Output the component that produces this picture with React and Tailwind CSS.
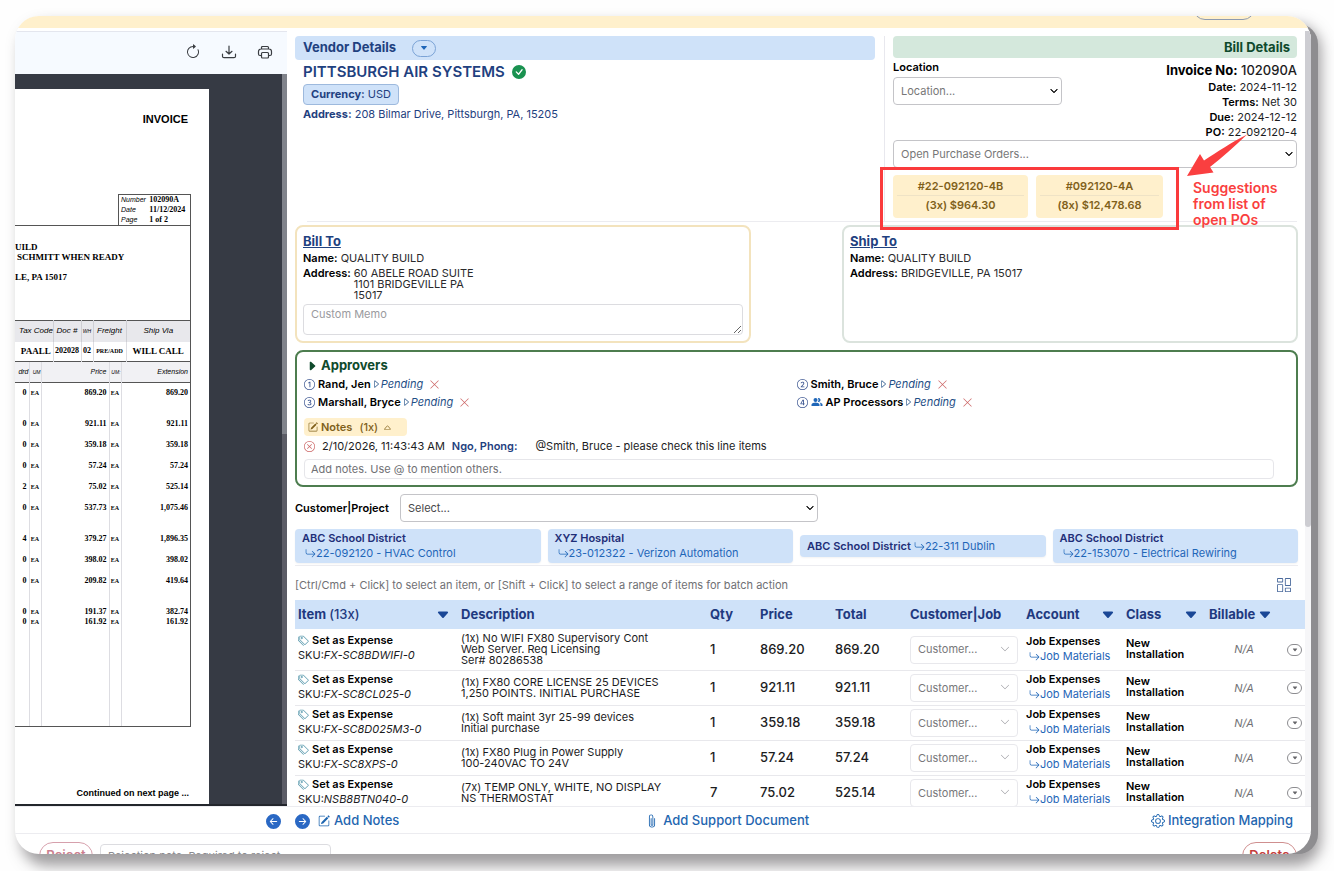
import React from 'react';
import {
  Bs1Circle,
  Bs2Circle,
  Bs3Circle,
  Bs4Circle,
  BsArrowClockwise,
  BsArrowLeftCircleFill,
  BsArrowReturnRight,
  BsArrowRightCircleFill,
  BsCaretDownFill,
  BsCaretRight,
  BsCaretRightFill,
  BsCaretUp,
  BsCheckCircleFill,
  BsChevronDown,
  BsColumnsGap,
  BsGear,
  BsPaperclip,
  BsPencilSquare,
  BsTags,
  BsXCircle,
  BsXLg,
} from 'react-icons/bs';
import { MdPeopleAlt } from 'react-icons/md';

const invoiceLines = [
  { ordered: '0', price: '869.20', ext: '869.20', height: 'h-[31px]' },
  { ordered: '0', price: '921.11', ext: '921.11', height: 'h-[21px]' },
  { ordered: '0', price: '359.18', ext: '359.18', height: 'h-[21px]' },
  { ordered: '0', price: '57.24', ext: '57.24', height: 'h-[21px]' },
  { ordered: '2', price: '75.02', ext: '525.14', height: 'h-[21px]' },
  { ordered: '0', price: '537.73', ext: '1,075.46', height: 'h-[31px]' },
  { ordered: '4', price: '379.27', ext: '1,896.35', height: 'h-[21px]' },
  { ordered: '0', price: '398.02', ext: '398.02', height: 'h-[21px]' },
  { ordered: '0', price: '209.82', ext: '419.64', height: 'h-[31px]' },
  { ordered: '0', price: '191.37', ext: '382.74', height: 'h-[10px]' },
  { ordered: '0', price: '161.92', ext: '161.92', height: 'h-[109px]' },
];

const approvers = [
  { Icon: Bs1Circle, name: 'Rand, Jen' },
  { Icon: Bs2Circle, name: 'Smith, Bruce' },
  { Icon: Bs3Circle, name: 'Marshall, Bryce' },
  { Icon: Bs4Circle, name: 'AP Processors', group: true },
];

const projects = [
  { customer: 'ABC School District', job: '22-092120 - HVAC Control' },
  { customer: 'XYZ Hospital', job: '23-012322 - Verizon Automation' },
  { customer: 'ABC School District', job: '22-311 Dublin', inline: true },
  { customer: 'ABC School District', job: '22-153070 - Electrical Rewiring' },
];

const items = [
  { sku: 'FX-SC8BDWIFI-0', desc: ['(1x) No WIFI FX80 Supervisory Cont', 'Web Server. Req Licensing', 'Ser# 80286538'], qty: 1, price: '869.20', total: '869.20' },
  { sku: 'FX-SC8CL025-0', desc: ['(1x) FX80 CORE LICENSE 25 DEVICES', '1,250 POINTS. INITIAL PURCHASE'], qty: 1, price: '921.11', total: '921.11' },
  { sku: 'FX-SC8D025M3-0', desc: ['(1x) Soft maint 3yr 25-99 devices', 'Initial purchase'], qty: 1, price: '359.18', total: '359.18' },
  { sku: 'FX-SC8XPS-0', desc: ['(1x) FX80 Plug in Power Supply', '100-240VAC TO 24V'], qty: 1, price: '57.24', total: '57.24' },
  { sku: 'NSB8BTN040-0', desc: ['(7x) TEMP ONLY, WHITE, NO DISPLAY', 'NS THERMOSTAT'], qty: 7, price: '75.02', total: '525.14' },
];

const SelectBox = ({ id, label, placeholder, className = '', tone = 'text-[#777777]' }) => (
  <div className={`relative ${className}`}>
    <select
      id={id}
      aria-label={label}
      className={`block h-7 w-full appearance-none rounded border border-[#c4c4c8] bg-white px-[7px] text-[11px] ${tone}`}
    >
      <option>{placeholder}</option>
    </select>
    <BsChevronDown className="pointer-events-none absolute right-1 top-[10px] size-2 stroke-[1.5] text-black" />
  </div>
);

const PdfToolbar = () => (
  <div className="flex h-[43px] shrink-0 items-center justify-end gap-5 border-t border-[#e4e6ee] bg-[#f6faff] pr-3.5 pb-0.5 text-[#3a3d42]">
    <button aria-label="Rotate"><BsArrowClockwise className="size-4" /></button>
    <button aria-label="Download">
      <svg className="size-4" viewBox="0 0 16 16" fill="none" stroke="currentColor" strokeWidth="1.2" strokeLinecap="round" strokeLinejoin="round">
        <path d="M8 2v8M5 7.3 8 10l3-2.7M1.500 10v2.200a1.500 1.500 0 0 0 1.500 1.500h10a1.500 1.500 0 0 0 1.500-1.500V10" />
      </svg>
    </button>
    <button aria-label="Print">
      <svg className="size-4" viewBox="0 0 16 16" fill="none" stroke="currentColor" strokeWidth="1.2" strokeLinejoin="round">
        <path d="M4.500 5V3.500A1 1 0 0 1 5.500 2.500h5a1 1 0 0 1 1 1V5M4.500 11.500H3a1.500 1.500 0 0 1-1.500-1.500V7.500A2.500 2.500 0 0 1 4 5h8a2.500 2.500 0 0 1 2.500 2.500V10a1.500 1.500 0 0 1-1.500 1.500h-1.500" />
        <rect x="4.500" y="8.500" width="7" height="5.500" rx="1" />
      </svg>
    </button>
  </div>
);

const InvoicePage = () => (
  <div className="w-[194px] bg-white pr-[18px] font-['Liberation_Serif',serif] text-[9px] leading-[10px] font-bold text-black">
    <h2 className="pt-[23px] pr-[3px] text-right font-['Liberation_Sans',sans-serif] text-[11px] leading-[14px]">INVOICE</h2>
    <table className="mt-[68px] ml-auto w-[73px] border border-b-0 border-[#555555]">
      <tbody>
        {[['Number', '102090A'], ['Date', '11/12/2024'], ['Page', '1 of 2']].map(([label, value]) => (
          <tr key={label}>
            <th className="pl-0.5 text-left font-['Liberation_Sans',sans-serif] text-[7px] font-normal italic">{label}</th>
            <td className="whitespace-nowrap text-[8px]">{value}</td>
          </tr>
        ))}
      </tbody>
    </table>
    <div className="border-y border-r border-[#555555]">
      <div className="h-[94px] pt-4 whitespace-nowrap">
        <p>UILD</p>
        <p className="pl-0.5">SCHMITT WHEN READY</p>
        <p className="pt-2.5">LE, PA 15017</p>
      </div>
      <table className="w-full table-fixed border-y border-[#555555] text-center whitespace-nowrap">
        <colgroup>
          <col />
          <col className="w-[28px]" />
          <col className="w-[12px]" />
          <col className="w-[33px]" />
          <col className="w-[64px]" />
        </colgroup>
        <thead>
          <tr className="h-[21px] bg-[#e8e8ec] font-['Liberation_Sans',sans-serif] text-[8px] italic">
            <th className="pl-1 font-normal">Tax Code</th>
            <th className="border-l border-[#cfcfd4] font-normal">Doc #</th>
            <th className="border-l border-[#cfcfd4] text-[5px] font-normal">WH</th>
            <th className="border-l border-[#cfcfd4] font-normal">Freight</th>
            <th className="border-l border-[#cfcfd4] font-normal">Ship Via</th>
          </tr>
        </thead>
        <tbody>
          <tr className="h-[20px]">
            <td className="pl-1">PAALL</td>
            <td className="border-l border-[#dddde2] text-[8px]">202028</td>
            <td className="border-l border-[#dddde2] text-[8px]">02</td>
            <td className="border-l border-[#dddde2] text-[6px]">PRE/ADD</td>
            <td className="border-l border-[#dddde2]">WILL CALL</td>
          </tr>
        </tbody>
      </table>
      <table className="w-full table-fixed text-right whitespace-nowrap">
        <colgroup>
          <col className="w-[14px]" />
          <col className="w-[12px]" />
          <col />
          <col className="w-[12px]" />
          <col className="w-[69px]" />
        </colgroup>
        <thead>
          <tr className="h-[20px] border-b border-[#555555] bg-[#f1f1f4] font-['Liberation_Sans',sans-serif] text-[7px] italic">
            <th className="font-normal">drd</th>
            <th className="border-x border-[#dddde2] text-[5px] font-normal">UM</th>
            <th className="pr-0.5 font-normal">Price</th>
            <th className="border-x border-[#dddde2] text-[5px] font-normal">UM:</th>
            <th className="pr-0.5 font-normal">Extension</th>
          </tr>
        </thead>
        <tbody className="align-top text-[8px]">
          <tr className="h-[6px]">
            <td />
            <td className="border-x border-[#dddde2]" />
            <td />
            <td className="border-x border-[#dddde2]" />
            <td />
          </tr>
          {invoiceLines.map((line) => (
            <tr key={line.price} className={line.height}>
              <td className="pr-0.5">{line.ordered}</td>
              <td className="border-x border-[#dddde2] text-center text-[6px]">EA</td>
              <td className="pr-0.5">{line.price}</td>
              <td className="border-x border-[#dddde2] text-center text-[6px]">EA</td>
              <td className="pr-0.5">{line.ext}</td>
            </tr>
          ))}
        </tbody>
      </table>
    </div>
    <p className="pt-[60px] pr-[2px] text-right font-['Liberation_Sans',sans-serif] leading-3">Continued on next page ...</p>
  </div>
);

const PdfPane = () => (
  <aside className="flex w-[272px] shrink-0 flex-col">
    <PdfToolbar />
    <div className="flex min-h-0 flex-1 overflow-hidden border-b-2 border-[#23262c] bg-[#363a44]">
      <div className="flex pt-[15px]">
        <InvoicePage />
      </div>
      <div className="ml-auto flex w-[5px] flex-col bg-[#5b5c66]">
        <div className="h-[360px] bg-[#80838b]" />
      </div>
    </div>
  </aside>
);

const VendorDetails = () => (
  <section className="flex-1 pr-[9px] text-[#1f4180]">
    <div className="flex h-6 items-center gap-4 rounded-sm bg-[#cfe2f9] px-2">
      <h2 className="text-[13px] font-bold">Vendor Details</h2>
      <button aria-label="Vendor options" className="flex h-[17px] w-6 items-center justify-center rounded-full border border-[#7ba3d6] text-[#1f66b8]">
        <BsCaretDownFill className="size-2" />
      </button>
    </div>
    <div className="px-2">
      <h3 className="flex items-center gap-[7px] pt-0.5 text-[15px] leading-5 font-semibold">
        PITTSBURGH AIR SYSTEMS
        <BsCheckCircleFill className="size-3.5 text-[#1a9250]" />
      </h3>
      <div className="mt-0.5 flex">
        <span className="rounded border border-[#9db9dd] bg-[#cfe2f9] px-[7px] text-[11px] leading-[19px]">
          <b>Currency:</b> USD
        </span>
      </div>
      <p className="pt-px text-[11px] leading-4"><b>Address:</b> 208 Bilmar Drive, Pittsburgh, PA, 15205</p>
    </div>
  </section>
);

const Annotation = () => (
  <>
    <div className="pointer-events-none absolute -top-2 -right-4 -bottom-3 -left-[13px] border-[3px] border-[#fa3a3c]" />
    <svg className="pointer-events-none absolute -top-[43px] left-full ml-6 h-[46px] w-[64px]" viewBox="0 0 64 46" fill="#fa3f40">
      <path d="M0 44 13 22 17 28.500C30 20 45 10 60 2.500 48 14 36 25 23 35l3.500 5.500Z" />
    </svg>
    <p className="pointer-events-none absolute top-[5px] left-full ml-[30px] w-24 text-[14px] leading-4 font-semibold text-[#fa3f40]">
      Suggestions from list of open POs
    </p>
  </>
);

const BillDetails = () => (
  <section className="w-[413px] border-l border-[#e8e8ee] pb-[3px] pl-2 text-[#1c1c1e]">
    <h2 className="h-[22px] rounded-sm bg-[#d4e8dc] pr-[7px] text-right text-[13px] leading-[22px] font-bold text-[#0f4a2c]">Bill Details</h2>
    <div className="flex justify-between">
      <div>
        <label htmlFor="location" className="block pt-px pb-0.5 text-[11px] leading-4 font-semibold text-black">Location</label>
        <SelectBox id="location" placeholder="Location..." className="w-[169px]" />
      </div>
      <div className="pt-1 text-right text-[11px] leading-[15px]">
        <p className="pb-0.5 text-[13px] leading-4 font-medium"><b className="text-black">Invoice No:</b> 102090A</p>
        <p><b className="font-semibold text-black">Date:</b> 2024-11-12</p>
        <p><b className="font-semibold text-black">Terms:</b> Net 30</p>
        <p><b className="font-semibold text-black">Due:</b> 2024-12-12</p>
        <p><b className="font-semibold text-black">PO:</b> 22-092120-4</p>
      </div>
    </div>
    <SelectBox label="Open purchase orders" placeholder="Open Purchase Orders..." />
    <div className="relative mt-[7px] flex w-[270px] gap-2 text-[11px] font-semibold text-[#80601a]">
      <button className="flex-1 rounded-sm bg-[#fff0cc] px-1 pt-[3px] pb-1">
        <span className="block border-b border-[#efe3c6] leading-[17px]">#22-092120-4B</span>
        <span className="block leading-[18px]">(3x) $964.30</span>
      </button>
      <button className="w-[127px] rounded-sm bg-[#fff0cc] px-1 pt-[3px] pb-1">
        <span className="block border-b border-[#efe3c6] leading-[17px]">#092120-4A</span>
        <span className="block leading-[18px]">(8x) $12,478.68</span>
      </button>
      <Annotation />
    </div>
  </section>
);

const AddressCards = () => (
  <div className="flex justify-between gap-[91px] pt-[3px] pr-[7px] text-[11px] leading-[15px] text-[#2a2a2c]">
    <section className="flex-1 rounded-lg border-2 border-[#f3e3bd] px-1.5 pt-[5px] pb-1.5">
      <h3><a href="#bill-to" className="text-[13px] leading-[18px] font-bold text-[#1f4180] underline">Bill To</a></h3>
      <p className="pt-px"><b className="font-semibold text-black">Name:</b> QUALITY BUILD</p>
      <div className="flex gap-[3px]">
        <b className="font-semibold text-black">Address:</b>
        <p className="pt-0.5 leading-[11px]">60 ABELE ROAD SUITE<br />1101 BRIDGEVILLE PA<br />15017</p>
      </div>
      <textarea
        aria-label="Custom memo"
        placeholder="Custom Memo"
        className="mt-[3px] block h-[31px] w-full resize-y rounded-sm border border-[#dcdce0] px-[7px] py-0.5 placeholder:text-[#9a9a9e]"
      />
    </section>
    <section className="flex-1 rounded-lg border-2 border-[#dbe3dd] px-1.5 pt-[5px]">
      <h3><a href="#ship-to" className="text-[13px] leading-[18px] font-bold text-[#1f4180] underline">Ship To</a></h3>
      <p className="pt-px"><b className="font-semibold text-black">Name:</b> QUALITY BUILD</p>
      <p><b className="font-semibold text-black">Address:</b> BRIDGEVILLE, PA 15017</p>
    </section>
  </div>
);

const Approvers = () => (
  <section className="mt-[7px] mr-[7px] rounded-lg border-2 border-[#4d7d4f] px-[7px] pt-[5px] pb-1.5 text-[11px] text-[#1c1c1e]">
    <h3 className="flex h-[18px] items-center gap-[3px] pl-0.5 text-[13px] font-bold text-[#0f4a2c]">
      <BsCaretRightFill className="size-3" />
      Approvers
    </h3>
    <div className="grid grid-cols-2">
      {approvers.map(({ Icon, name, group }) => (
        <div key={name} className="flex h-[18px] items-center">
          <Icon className="mr-[3px] size-[11px] text-[#3a5490]" />
          {group && <MdPeopleAlt className="mr-[3px] size-3 text-[#1f66b8]" />}
          <b className="font-semibold text-black">{name}</b>
          <BsCaretRight className="size-2.5 text-[#1f4f86]" />
          <i className="text-[#1f4f86]">Pending</i>
          <button aria-label={`Remove ${name}`} className="ml-1.5 text-[#cc6666]"><BsXLg className="size-[11px]" /></button>
        </div>
      ))}
    </div>
    <button className="mt-[7px] flex h-[18px] w-[103px] items-center gap-[3px] rounded-sm bg-[#fff0cc] pl-1 text-[#80601a]">
      <BsPencilSquare className="size-2.5" />
      <b className="font-semibold">Notes</b>
      <span className="pl-1 font-medium">(1x)</span>
      <BsCaretUp className="ml-0.5 size-[9px]" />
    </button>
    <div className="flex h-5 items-center">
      <button aria-label="Delete note" className="mr-[7px] text-[#cc6666]"><BsXCircle className="size-[11px]" /></button>
      2/10/2026, 11:43:43 AM
      <b className="mr-[18px] ml-[7px] font-semibold text-[#1f4180]">Ngo, Phong:</b>
      @Smith, Bruce - please check this line items
    </div>
    <div className="pt-[3px] pr-[15px]">
      <input aria-label="Add notes" placeholder="Add notes. Use @ to mention others." className="h-5 w-full rounded-sm border border-[#e6e6ea] px-1.5 placeholder:text-[#707074]" />
    </div>
  </section>
);

const ProjectPicker = () => (
  <section className="pr-[7px]">
    <div className="flex items-center pt-[7px]">
      <label htmlFor="project" className="w-[105px] text-[11px] font-semibold text-black">Customer|Project</label>
      <SelectBox id="project" placeholder="Select..." className="w-[418px]" tone="text-[#48484a]" />
    </div>
    <div className="grid grid-cols-4 items-center gap-[7px] border-b border-[#ececf0] pt-[7px] pb-0.5">
      {projects.map(({ customer, job, inline }) => (
        <button
          key={job}
          className={`rounded-sm bg-[#cfe2f9] px-[7px] text-left text-[11px] shadow-xs ${inline ? 'flex h-[22px] items-center' : 'h-[34px]'}`}
        >
          <b className="block leading-[15px] font-semibold text-[#1f2f78]">{customer}</b>
          <span className="flex items-center pl-[3px] leading-[15px] text-[#1f66b8]">
            <BsArrowReturnRight className="size-[11px]" />
            {job}
          </span>
        </button>
      ))}
    </div>
  </section>
);

const Sortable = ({ children }) => (
  <button className="flex w-full items-center justify-between pr-[7px]">
    <span>{children}</span>
    <BsCaretDownFill className="size-3.5 text-[#1a4796]" />
  </button>
);

const ItemsTable = () => (
  <table className="w-full table-fixed text-left text-[11px] text-[#1c1c1e]">
    <colgroup>
      <col className="w-[162px]" />
      <col />
      <col className="w-[50px]" />
      <col className="w-[75px]" />
      <col className="w-[75px]" />
      <col className="w-[116px]" />
      <col className="w-[100px]" />
      <col className="w-[83px]" />
      <col className="w-[74px]" />
      <col className="w-[26px]" />
    </colgroup>
    <thead>
      <tr className="h-[29px] bg-[#cfe2f9] text-[13px] text-[#1f3a80]">
        <th className="pl-[3px] font-bold"><Sortable>Item <span className="font-medium">(13x)</span></Sortable></th>
        <th className="pl-1 font-bold">Description</th>
        <th className="pl-1 font-bold">Qty</th>
        <th className="pl-1 font-bold">Price</th>
        <th className="pl-1 font-bold">Total</th>
        <th className="pl-1 font-bold whitespace-nowrap">Customer|Job</th>
        <th className="pl-1 font-bold"><Sortable>Account</Sortable></th>
        <th className="pl-1 font-bold"><Sortable>Class</Sortable></th>
        <th className="pl-1 font-bold"><Sortable>Billable</Sortable></th>
        <th aria-label="Actions" />
      </tr>
    </thead>
    <tbody>
      {items.map((item) => (
        <tr key={item.sku} className="border-b border-[#e8e8ec]">
          <td className="pb-[3px] pl-[3px] leading-[15px]">
            <button className="flex items-center gap-[3px] font-semibold text-black">
              <BsTags className="size-[11px] text-[#5f9db0]" />
              Set as Expense
            </button>
            <p>SKU:<i>{item.sku}</i></p>
          </td>
          <td className="py-1 pl-1 leading-[11px]">
            {item.desc.map((line) => <p key={line}>{line}</p>)}
          </td>
          <td className="pl-1 text-[13px] font-medium">{item.qty}</td>
          <td className="pl-1 text-[13px] font-medium">{item.price}</td>
          <td className="pl-1 text-[13px] font-medium">{item.total}</td>
          <td className="py-[3px] pr-1 pl-1">
            <div className="relative">
              <select aria-label="Customer" className="block h-7 w-full appearance-none rounded border border-[#e8e8ec] bg-white px-[7px] text-[#77777a]">
                <option>Customer...</option>
              </select>
              <BsChevronDown className="pointer-events-none absolute top-2 right-2 size-2.5 text-[#909096]" />
            </div>
          </td>
          <td className="pb-0.5 pl-1 leading-[15px]">
            <b className="block font-semibold text-black">Job Expenses</b>
            <a href="#job" className="flex items-center pl-[3px] text-[#1f66b8]"><BsArrowReturnRight className="size-[11px]" />Job Materials</a>
          </td>
          <td className="pb-0.5 pl-1 leading-[11px] font-semibold text-black">New<br />Installation</td>
          <td className="pl-1 text-center text-[#707074] italic">N/A</td>
          <td>
            <button aria-label="Row actions" className="ml-auto mr-[3px] flex h-3 w-[15px] items-center justify-center rounded-full border border-[#8c8c90] text-[#66666a]">
              <BsCaretDownFill className="size-1.5" />
            </button>
          </td>
        </tr>
      ))}
    </tbody>
  </table>
);

const BillPane = () => (
  <main className="flex min-w-0 flex-1 overflow-hidden">
    <div className="min-w-0 flex-1 overflow-hidden pt-[5px] pl-2">
      <div className="flex pr-2">
        <VendorDetails />
        <BillDetails />
      </div>
      <hr className="mr-2 ml-3 border-[#ececf0]" />
      <AddressCards />
      <Approvers />
      <ProjectPicker />
      <div className="flex h-[34px] items-center justify-between pt-1 pr-3.5 text-[11px] text-[#707074]">
        <p>[Ctrl/Cmd + Click] to select an item, or [Shift + Click] to select a range of items for batch action</p>
        <button aria-label="Layout" className="text-[#4a6a9c]"><BsColumnsGap className="size-3.5" /></button>
      </div>
      <ItemsTable />
    </div>
    <div className="w-1.5 shrink-0 bg-[#f6f6f8]">
      <div className="h-[64%] rounded-b-full bg-[#cdcdd2]" />
    </div>
  </main>
);

const ActionBar = () => (
  <nav className="flex h-7 shrink-0 items-center border-t border-b border-[#ececf0] pt-0.5 pr-[18px] text-[13px] font-medium text-[#1f66b0]">
    <div className="flex w-[49%] shrink-0 items-center pl-[251px]">
      <button aria-label="Previous bill" className="mr-3.5 text-[#2a68c4]"><BsArrowLeftCircleFill className="size-[15px]" /></button>
      <button aria-label="Next bill" className="mr-2 text-[#2a68c4]"><BsArrowRightCircleFill className="size-[15px]" /></button>
      <button className="flex items-center gap-1"><BsPencilSquare className="size-3" />Add Notes</button>
    </div>
    <button className="ml-1 flex items-center gap-1"><BsPaperclip className="size-3.5" />Add Support Document</button>
    <button className="ml-auto flex items-center gap-[3px]"><BsGear className="size-3.5" />Integration Mapping</button>
  </nav>
);

// The footer runs past the bottom edge of the window, only its top strip shows.
const Footer = () => (
  <footer className="flex h-5 shrink-0 items-start gap-[7px] overflow-hidden pt-2 pr-3.5 pl-6 text-[13px] font-semibold">
    <button className="h-7 w-[54px] shrink-0 rounded-full border border-[#d6a0ac] text-[#cc7f90]">Reject</button>
    <input aria-label="Rejection note" placeholder="Rejection note. Required to reject" className="mt-0.5 h-6 w-[231px] rounded-sm border border-[#dcdce0] px-[7px] text-[11px] font-normal placeholder:text-[#8a8a8e]" />
    <button className="ml-auto h-7 w-[55px] shrink-0 rounded-full border border-[#cf8f8f] text-[#c43c3c]">Delete</button>
  </footer>
);

export default function App() {
  return (
    <div className="h-screen overflow-hidden bg-[#fefefe] pt-4 pr-[23px] pb-[17px] pl-[15px] font-['Inter',sans-serif]">
      <div className="flex h-full flex-col overflow-hidden rounded-3xl bg-white shadow-[11px_4px_0_-4px_#8e8d90,8px_10px_14px_2px_rgba(70,65,70,0.5)]">
        <header className="flex h-3 shrink-0 items-end justify-end bg-[#fff0cc] pr-14 pb-2">
          <button aria-label="Menu" className="h-6 w-[62px] shrink-0 rounded-full border border-[#8d9ab0]" />
        </header>
        <div className="flex min-h-0 flex-1 pt-[3px]">
          <PdfPane />
          <BillPane />
        </div>
        <ActionBar />
        <Footer />
      </div>
    </div>
  );
}
